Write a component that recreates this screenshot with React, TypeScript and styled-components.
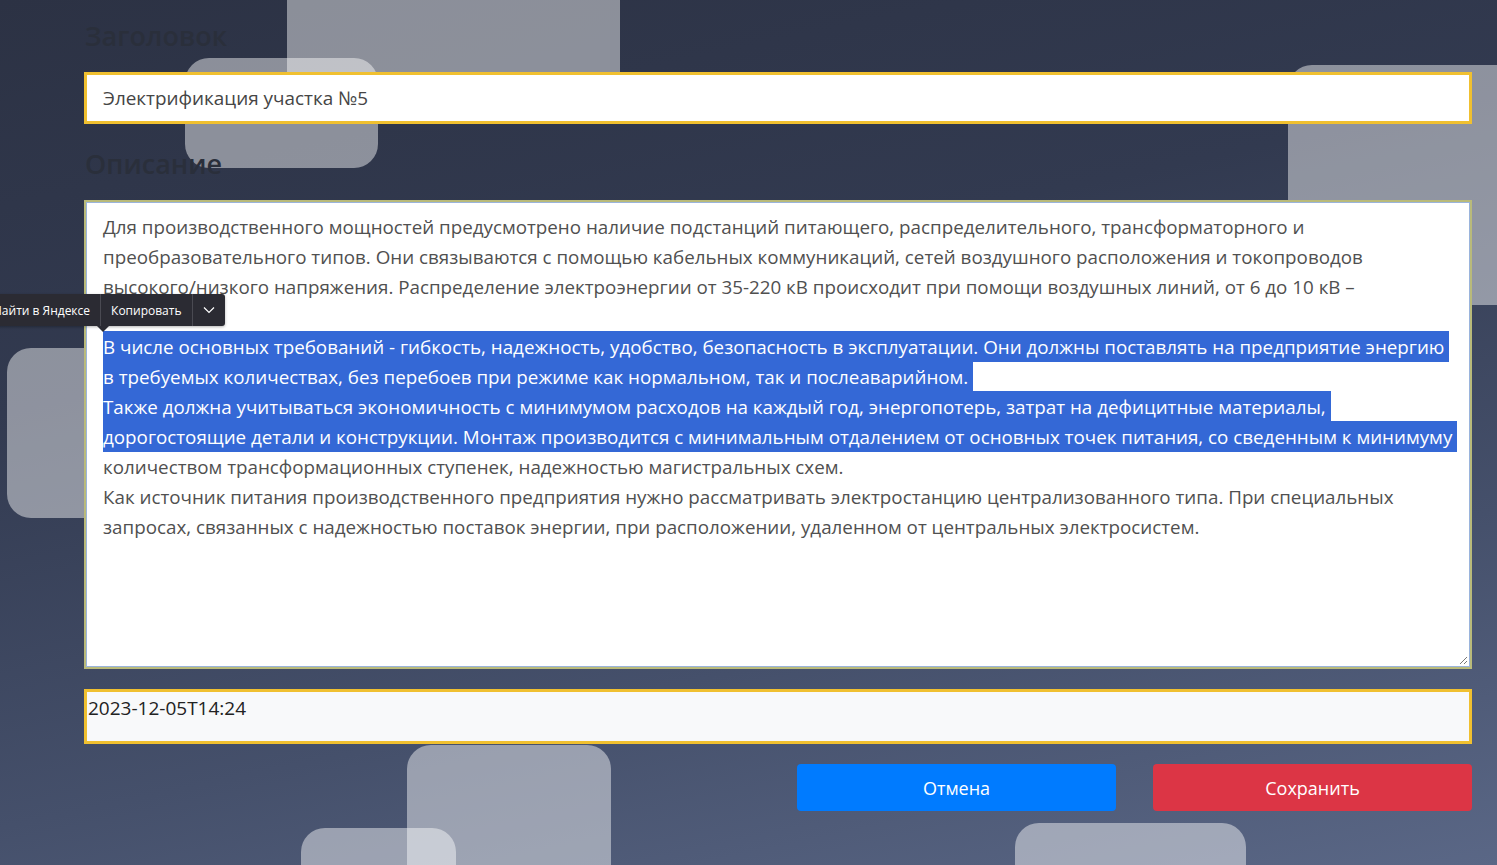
import React from "react";
import styled, { createGlobalStyle } from "styled-components";

const Global = createGlobalStyle`
  html, body { margin: 0; padding: 0; }
  body {
    width: 1497px;
    height: 865px;
    overflow: hidden;
    font-family: "Open Sans", "Noto Sans", sans-serif;
  }
`;

const Page = styled.div`
  position: relative;
  width: 1497px;
  height: 865px;
  overflow: hidden;
  background: linear-gradient(168deg, #2c3244 0%, #323a50 35%, #45506b 70%, #5a6786 100%);
`;

const Blob = styled.div<{ $x: number; $y: number; $w: number; $h: number }>`
  position: absolute;
  left: ${(p) => p.$x}px;
  top: ${(p) => p.$y}px;
  width: ${(p) => p.$w}px;
  height: ${(p) => p.$h}px;
  border-radius: 24px;
  background: rgba(255, 255, 255, 0.45);
`;

const Form = styled.div`
  position: relative;
  display: flex;
  flex-direction: column;
  padding: 18px 25px 0 84px;
`;

const Heading = styled.h2`
  margin: 0 0 18px 1px;
  font-family: "Open Sans", sans-serif;
  font-size: 27px;
  font-weight: 600;
  line-height: 36px;
  color: #2a2f3b;
`;

const TitleInput = styled.div`
  height: 46px;
  border: 3px solid #f0c030;
  background: #fff;
  display: flex;
  align-items: center;
  padding: 0 16px;
  font-size: 18.9px;
  color: #454545;
  margin-bottom: 22px;
`;

const Area = styled.div`
  position: relative;
  height: 455px;
  border: 2px solid #b9ba7a;
  box-shadow: inset 0 0 0 1px #9ab4dc;
  background: #fff;
  padding: 10px 14px 0 17px;
  margin-bottom: 20px;
`;

const Line = styled.div`
  height: 30px;
  line-height: 30px;
  white-space: pre;
  font-size: 18.8px;
  color: #505050;
`;

const Sel = styled.span`
  background: #3468d6;
  color: #fff;
  padding: 3px 0 2px;
`;

const Grip = styled.svg`
  position: absolute;
  right: 2px;
  bottom: 2px;
`;

const DateInput = styled.div`
  height: 45px;
  border: 3px solid #f0c030;
  background: #f8f9fa;
  padding: 4px 0 0 1px;
  font-size: 19px;
  line-height: 24px;
  color: #222;
  margin-bottom: 20px;
`;

const Buttons = styled.div`
  display: flex;
  justify-content: flex-end;
  gap: 37px;
`;

const Btn = styled.button<{ $bg: string }>`
  width: 319px;
  height: 47px;
  border: none;
  border-radius: 4px;
  background: ${(p) => p.$bg};
  color: #fff;
  font-family: "Open Sans", sans-serif;
  font-size: 18px;
  cursor: pointer;
`;

const Popup = styled.div`
  position: absolute;
  left: -17px;
  top: 294px;
  height: 32px;
  display: flex;
  align-items: center;
  background: #2b2b33;
  border-radius: 3px;
  font-family: "Open Sans", sans-serif;
  font-size: 12px;
  color: #fff;
  box-shadow: 0 1px 3px rgba(0, 0, 0, 0.3);
`;

const PopItem = styled.div`
  height: 100%;
  display: flex;
  align-items: center;
  padding: 0 10px;
  & + & {
    border-left: 1px solid #4a4a52;
  }
`;

const Arrow = styled.div`
  position: absolute;
  left: 114px;
  bottom: -6px;
  width: 0;
  height: 0;
  border-left: 6px solid transparent;
  border-right: 6px solid transparent;
  border-top: 6px solid #2b2b33;
`;

const lines: { t: string; s?: boolean }[] = [
  { t: "Для производственного мощностей предусмотрено наличие подстанций питающего, распределительного, трансформаторного и" },
  { t: "преобразовательного типов. Они связываются с помощью кабельных коммуникаций, сетей воздушного расположения и токопроводов" },
  { t: "высокого/низкого напряжения. Распределение электроэнергии от 35-220 кВ происходит при помощи воздушных линий, от 6 до 10 кВ –" },
  { t: "" },
  { t: "В числе основных требований - гибкость, надежность, удобство, безопасность в эксплуатации. Они должны поставлять на предприятие энергию ", s: true },
  { t: "в требуемых количествах, без перебоев при режиме как нормальном, так и послеаварийном. ", s: true },
  { t: "Также должна учитываться экономичность с минимумом расходов на каждый год, энергопотерь, затрат на дефицитные материалы, ", s: true },
  { t: "дорогостоящие детали и конструкции. Монтаж производится с минимальным отдалением от основных точек питания, со сведенным к минимуму ", s: true },
  { t: "количеством трансформационных ступенек, надежностью магистральных схем." },
  { t: "Как источник питания производственного предприятия нужно рассматривать электростанцию централизованного типа. При специальных" },
  { t: "запросах, связанных с надежностью поставок энергии, при расположении, удаленном от центральных электросистем." },
];

export default function App() {
  return (
    <Page>
      <Global />
      <Blob $x={287} $y={-200} $w={333} $h={310} />
      <Blob $x={185} $y={58} $w={193} $h={110} />
      <Blob $x={1288} $y={65} $w={260} $h={240} />
      <Blob $x={7} $y={348} $w={160} $h={170} />
      <Blob $x={407} $y={745} $w={204} $h={200} />
      <Blob $x={301} $y={828} $w={155} $h={120} />
      <Blob $x={1015} $y={823} $w={231} $h={120} />
      <Form>
        <Heading>Заголовок</Heading>
        <TitleInput>Электрификация участка №5</TitleInput>
        <Heading>Описание</Heading>
        <Area>
          {lines.map((l, i) => (
            <Line key={i}>{l.s ? <Sel>{l.t}</Sel> : l.t}</Line>
          ))}
          <Grip width="10" height="10" viewBox="0 0 10 10">
            <path d="M9 2 L2 9 M9 6 L6 9" stroke="#777" strokeWidth="1" fill="none" />
          </Grip>
        </Area>
        <DateInput>2023-12-05T14:24</DateInput>
        <Buttons>
          <Btn $bg="#007bff">Отмена</Btn>
          <Btn $bg="#dc3545">Сохранить</Btn>
        </Buttons>
      </Form>
      <Popup>
        <PopItem>Найти в Яндексе</PopItem>
        <PopItem>Копировать</PopItem>
        <PopItem>
          <svg width="12" height="8" viewBox="0 0 12 8">
            <path d="M1 1.5 L6 6.5 L11 1.5" stroke="#fff" strokeWidth="1.2" fill="none" />
          </svg>
        </PopItem>
        <Arrow />
      </Popup>
    </Page>
  );
}
